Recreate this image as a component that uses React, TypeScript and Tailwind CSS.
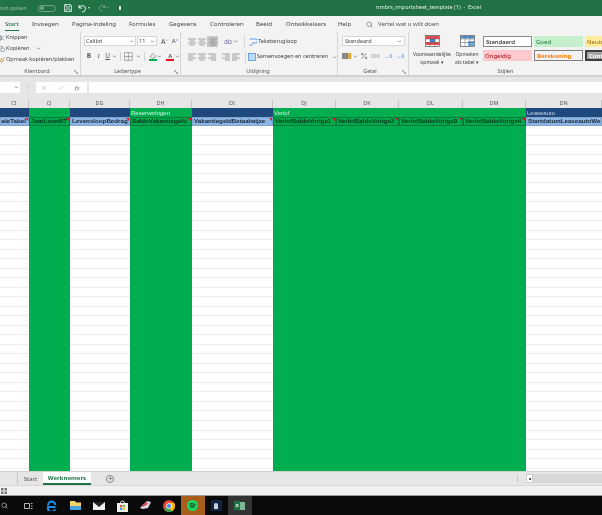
import React from 'react';
import { Scissors, Copy, Paintbrush, Search, Plus, Check, X, Percent, ChevronDown } from 'lucide-react';

const ui = "font-['Noto_Sans',sans-serif]";

const columns = [
  { id: 'CI', group: '', name: 'SchaleTabel', green: false, end: true },
  { id: 'CJ', group: '', name: 'JaarLoonBT', green: true },
  { id: 'DG', group: '', name: 'LevensloopBedrag', green: false },
  { id: 'DH', group: 'Reserveringen', name: 'SaldoVakantiegeld', green: true },
  { id: 'DI', group: '', name: 'VakantiegeldBetaalwijze', green: false },
  { id: 'DJ', group: 'Verlof', name: 'VerlofSaldoVorige1', green: true },
  { id: 'DK', group: '', name: 'VerlofSaldoVorige2', green: true },
  { id: 'DL', group: '', name: 'VerlofSaldoVorige3', green: true },
  { id: 'DM', group: '', name: 'VerlofSaldoVorige4', green: true },
  { id: 'DN', group: 'Leaseauto', name: 'StartdatumLeaseautoWerknemer', green: false, noFlag: true },
];

const gridCols = 'grid grid-cols-[29px_41px_60px_62px_81px_63px_63px_64px_63px_76px]';
const rows = Array.from({ length: 37 }, (_, i) => i);

const tabs = [
  ['Invoegen', 'w-[40px]'],
  ['Pagina-indeling', 'w-[57px]'],
  ['Formules', 'w-[40px]'],
  ['Gegevens', 'w-[41px]'],
  ['Controleren', 'w-[46px]'],
  ['Beeld', 'w-[30px]'],
  ['Ontwikkelaars', 'w-[52px]'],
  ['Help', 'w-[28px]'],
];

// three or four thin lines, the alignment glyphs of the ribbon
const Lines = ({ align = 'left' }: { align?: 'left' | 'center' | 'right' }) => {
  const short = align === 'left' ? 'M0 3h5' : align === 'center' ? 'M1.5 3h5' : 'M3 3h5';
  const short2 = align === 'left' ? 'M0 7h5' : align === 'center' ? 'M1.5 7h5' : 'M3 7h5';
  return (
    <svg width="8" height="8" viewBox="0 0 8 8" stroke="#8a8a8a" strokeWidth="0.8">
      <path d="M0 1h8" />
      <path d={short} />
      <path d="M0 5h8" />
      <path d={short2} />
    </svg>
  );
};

const Launcher = () => (
  <svg width="4" height="4" viewBox="0 0 4 4" fill="none" stroke="#777" strokeWidth="0.6" className="shrink-0">
    <path d="M0.3 0.3h2M0.3 0.3v2M1.2 1.2l2.5 2.5M3.7 2v1.7H2" />
  </svg>
);

const Caret = () => <ChevronDown className="w-[5px] h-[5px] text-[#555] shrink-0" strokeWidth={3} />;

const Group = ({ label, width, children, launcher }: { label: string; width: string; children: React.ReactNode; launcher?: boolean }) => (
  <div className={`${width} shrink-0 h-full flex flex-col border-r border-[#d4d4d4]`}>
    <div className="flex-1 min-h-0">{children}</div>
    <div className="h-[7px] flex items-center pr-[2px]">
      <span className="flex-1 text-center text-[5.5px] leading-none text-[#555]">{label}</span>
      {launcher && <Launcher />}
    </div>
  </div>
);

const StyleCell = ({ label, className }: { label: string; className: string }) => (
  <div className={`h-[11px] flex items-center px-[2px] text-[6px] leading-none whitespace-nowrap overflow-hidden ${className}`}>{label}</div>
);

const TableIcon = ({ kind }: { kind: 'cond' | 'table' }) => (
  <svg width="15" height="12" viewBox="0 0 15 12">
    <rect x="0.5" y="0.5" width="14" height="11" fill="#fff" stroke="#555" strokeWidth="0.7" />
    {kind === 'cond' ? (
      <>
        <rect x="1" y="1" width="13" height="3" fill="#e8474c" />
        <rect x="1" y="7" width="13" height="3" fill="#e8474c" />
        <rect x="5" y="4" width="5" height="3" fill="#3b82d6" />
      </>
    ) : (
      <>
        <rect x="1" y="1" width="13" height="2.5" fill="#4a90d9" />
        <rect x="8" y="6" width="6" height="5" fill="#6aaee6" />
      </>
    )}
    <path d="M5 0.5v11M10 0.5v11M0.5 4h14M0.5 7.5h14" stroke="#666" strokeWidth="0.5" />
  </svg>
);

const Ribbon = () => (
  <div className={`h-[45px] bg-[#f3f3f3] flex border-b-[2px] border-[#d2d2d2] text-[#444] ${ui}`}>
    <Group label="Klembord" width="w-[81px]" launcher>
      <div className="flex flex-col text-[5.5px] leading-none">
        <div className="h-[11px] flex items-center gap-[1px]">
          <Scissors className="w-[6px] h-[6px] -ml-[1px] text-[#5a6b7a]" />
          <span>Knippen</span>
        </div>
        <div className="h-[11px] flex items-center gap-[1px]">
          <Copy className="w-[6px] h-[6px] -ml-[1px] text-[#5a6b7a]" />
          <span>Kopiëren</span>
          <span className="ml-[6px]"><Caret /></span>
        </div>
        <div className="h-[11px] flex items-center gap-[1px] whitespace-nowrap">
          <Paintbrush className="w-[6px] h-[6px] -ml-[1px] text-[#b8862d]" />
          <span>Opmaak kopiëren/plakken</span>
        </div>
      </div>
    </Group>

    <Group label="Lettertype" width="w-[100px]" launcher>
      <div className="pl-[3px] pt-[4px] flex flex-col gap-[6px]">
        <div className="flex items-center gap-[1px]">
          <div className="w-[52px] h-[10px] bg-white border border-[#d6d6d6] flex items-center justify-between px-[1px] text-[5.5px]">
            Calibri <Caret />
          </div>
          <div className="w-[20px] h-[10px] bg-white border border-[#d6d6d6] flex items-center justify-between px-[1px] text-[5.5px]">
            11 <Caret />
          </div>
          <span className="text-[7px] leading-none ml-[3px]">A<sup className="text-[#3b82d6] text-[4px]">^</sup></span>
          <span className="text-[6px] leading-none ml-[3px]">A<sup className="text-[#3b82d6] text-[4px]">v</sup></span>
        </div>
        <div className="flex items-center text-[6.5px] leading-none text-[#555]">
          <span className="w-[10px] text-center font-bold">B</span>
          <span className="w-[10px] text-center italic font-['Liberation_Serif',serif]">I</span>
          <span className="w-[9px] text-center underline">U</span>
          <Caret />
          <span className="w-[1px] h-[9px] bg-[#d4d4d4] mx-[3px]" />
          <svg width="9" height="9" viewBox="0 0 9 9" fill="none" stroke="#888" strokeWidth="0.7"><path d="M0.5 0.5h8v8h-8zM4.5 0.5v8M0.5 4.5h8" /></svg>
          <span className="ml-[3px]"><Caret /></span>
          <span className="w-[1px] h-[9px] bg-[#d4d4d4] mx-[3px]" />
          <span className="flex flex-col items-center w-[10px]">
            <svg width="8" height="6" viewBox="0 0 8 6"><path d="M4 0.5L7 3.5 4 5.5 1 3.5z" fill="#eee" stroke="#666" strokeWidth="0.6" /></svg>
            <span className="w-[8px] h-[2px] bg-[#00b050]" />
          </span>
          <Caret />
          <span className="flex flex-col items-center w-[10px] ml-[3px]">
            <span className="text-[6px] leading-[6px] font-semibold">A</span>
            <span className="w-[8px] h-[2px] bg-[#e81123]" />
          </span>
          <Caret />
        </div>
      </div>
    </Group>

    <Group label="Uitlijning" width="w-[157px]">
      <div className="pl-[6px] pt-[4px] flex flex-col gap-[5px]">
        <div className="flex items-center h-[11px]">
          <span className="w-[10px] flex justify-center"><Lines align="center" /></span>
          <span className="w-[10px] flex justify-center"><Lines align="center" /></span>
          <span className="w-[11px] h-[11px] bg-[#c6c6c6] flex justify-center items-center"><Lines align="center" /></span>
          <span className="w-[10px] ml-[5px] flex justify-center text-[7px] leading-none text-[#7a6ea8]">ab</span>
          <Caret />
          <span className="w-[1px] h-[11px] bg-[#d4d4d4] ml-[6px] mr-[4px]" />
          <svg width="8" height="8" viewBox="0 0 8 8" fill="none" stroke="#3b82d6" strokeWidth="0.8"><path d="M0.5 1h6a1.5 1.5 0 010 4H3M0.5 7h3" /></svg>
          <span className="text-[5.5px] leading-none ml-[1px]">Tekstterugloop</span>
        </div>
        <div className="flex items-center h-[10px]">
          <span className="w-[10px] flex justify-center"><Lines align="left" /></span>
          <span className="w-[10px] flex justify-center"><Lines align="center" /></span>
          <span className="w-[11px] flex justify-center"><Lines align="right" /></span>
          <span className="w-[10px] ml-[4px] flex justify-center"><Lines align="right" /></span>
          <span className="w-[10px] flex justify-center"><Lines align="left" /></span>
          <span className="w-[1px] h-[11px] bg-[#d4d4d4] ml-[4px] mr-[2px]" />
          <svg width="8" height="8" viewBox="0 0 8 8"><rect x="0.5" y="0.5" width="7" height="7" fill="#bcd9f2" stroke="#3b82d6" strokeWidth="0.7" /></svg>
          <span className="text-[5.5px] leading-none ml-[1px] whitespace-nowrap">Samenvoegen en centreren</span>
          <span className="ml-[4px]"><Caret /></span>
        </div>
      </div>
    </Group>

    <Group label="Getal" width="w-[71px]" launcher>
      <div className="pl-[4px] pt-[4px] flex flex-col gap-[6px]">
        <div className="w-[63px] h-[10px] bg-white border border-[#d6d6d6] flex items-center justify-between px-[2px] text-[5.5px]">
          Standaard <Caret />
        </div>
        <div className="flex items-center gap-[2px]">
          <span className="w-[9px] h-[6px] bg-[#888] border-r-[3px] border-[#e8a33d]" />
          <Caret />
          <Percent className="w-[8px] h-[8px] text-[#666]" />
          <span className="text-[5px] leading-none text-[#999] ml-[1px]">000</span>
          <span className="text-[5px] leading-none text-[#3b82d6] ml-[3px]">←0</span>
          <span className="text-[5px] leading-none text-[#3b82d6] ml-[2px]">→0</span>
        </div>
      </div>
    </Group>

    <div className="flex-1 h-full flex flex-col overflow-hidden">
      <div className="flex flex-1 min-h-0">
        <div className="w-[44px] shrink-0 pt-[3px] pl-[2px] flex flex-col items-center text-[5px] leading-[8px]">
          <TableIcon kind="cond" />
          <span className="mt-[3px] whitespace-nowrap">Voorwaardelijke</span>
          <span>opmaak ▾</span>
        </div>
        <div className="w-[28px] shrink-0 pt-[3px] flex flex-col items-center text-[5px] leading-[8px]">
          <TableIcon kind="table" />
          <span className="mt-[3px] whitespace-nowrap">Opmaken</span>
          <span className="whitespace-nowrap">als tabel ▾</span>
        </div>
        <div className="flex-1 pt-[4px] pl-[2px] grid grid-cols-[49px_49px_49px] gap-x-[2px] gap-y-[3px] content-start">
          <StyleCell label="Standaard" className="bg-white border border-[#8a8a8a] text-black" />
          <StyleCell label="Goed" className="bg-[#c6efce] text-[#1e7a3c]" />
          <StyleCell label="Neutraal" className="bg-[#ffeb9c] text-[#9c6500]" />
          <StyleCell label="Ongeldig" className="bg-[#ffc7ce] text-[#9c0006]" />
          <StyleCell label="Berekening" className="bg-[#f2f2f2] border border-[#7f7f7f] text-[#fa7d00] font-bold" />
          <StyleCell label="Controle" className="bg-[#a5a5a5] border-2 border-[#3f3f3f] text-white font-bold" />
        </div>
      </div>
      <div className="h-[7px] flex items-center justify-center text-[5.5px] leading-none text-[#555]">Stijlen</div>
    </div>
  </div>
);

const TaskIcon = ({ children, className = '' }: { children?: React.ReactNode; className?: string }) => (
  <div className={`w-[23.5px] h-full shrink-0 flex items-center justify-center ${className}`}>{children}</div>
);

export default function App() {
  return (
    <div className="w-[602px] h-[515px] overflow-hidden flex flex-col bg-[#e6e6e6] blur-[0.45px]">
      {/* title bar */}
      <div className={`h-[16px] shrink-0 bg-[#217346] flex items-center text-[#d7e8de] text-[5.5px] leading-none whitespace-nowrap ${ui}`}>
        <span className="-ml-[18px] w-[54px] text-[4.5px] opacity-60">Automatisch opslaan</span>
        <span className="w-[18px] h-[7px] rounded-full border border-[#6fa488] flex items-center pl-[1px] ml-[2px]">
          <span className="w-[4px] h-[4px] rounded-full bg-[#6fa488]" />
        </span>
        <svg width="8" height="8" viewBox="0 0 8 8" fill="none" stroke="#e3efe8" strokeWidth="0.8" className="ml-[8px]">
          <path d="M0.5 0.5h6l1 1v6h-7zM2 0.5v2.5h4V0.5M2 7.5V5h4v2.5" />
        </svg>
        <svg width="9" height="9" viewBox="0 0 9 9" fill="none" stroke="#e3efe8" strokeWidth="1" className="ml-[6px]">
          <path d="M1 1v3h3M1.2 4A3.2 3.2 0 114 8" />
        </svg>
        <span className="w-0 h-0 border-x-[1.5px] border-t-[2px] border-x-transparent border-t-[#e3efe8] ml-[1px]" />
        <svg width="8" height="8" viewBox="0 0 9 9" fill="none" stroke="#6fa488" strokeWidth="1" className="ml-[8px]">
          <path d="M8 1v3H5M7.8 4A3.2 3.2 0 105 8" />
        </svg>
        <span className="w-0 h-0 border-x-[1.5px] border-t-[2px] border-x-transparent border-t-[#6fa488] ml-[1px]" />
        <span className="w-[2px] h-[4px] bg-[#e3efe8] ml-[10px]" />
        <span className="ml-[255px] text-[#e3efe8]">nmbrs_importsheet_template (1)&nbsp; -&nbsp; Excel</span>
      </div>

      {/* ribbon tabs */}
      <div className={`h-[16px] shrink-0 bg-[#f3f3f3] flex items-center text-[6px] leading-none text-[#444] whitespace-nowrap pl-[5px] ${ui}`}>
        <span className="w-[27px]"><span className="font-medium text-[#217346] border-b border-[#217346] pb-[2px]">Start</span></span>
        {tabs.map(([label, width]) => (
          <span key={label} className={`${width} shrink-0`}>{label}</span>
        ))}
        <Search className="w-[7px] h-[7px] text-[#666] shrink-0" />
        <span className="ml-[5px] text-[#555]">Vertel wat u wilt doen</span>
      </div>

      <Ribbon />

      {/* formula bar */}
      <div className={`h-[23px] shrink-0 bg-[#e6e6e6] flex pt-[5px] pb-[7px] ${ui}`}>
        <div className="w-[20px] bg-white flex items-center justify-end pr-[1px]"><Caret /></div>
        <div className="w-[16px] flex items-center justify-center text-[#aaa] text-[6px]">⋮</div>
        <div className="w-[51px] bg-white flex items-center gap-[11px] pl-[5px] text-[#777]">
          <X className="w-[6px] h-[6px] text-[#aaa]" />
          <Check className="w-[6px] h-[6px] text-[#aaa]" />
          <span className="text-[6px] leading-none italic font-['Liberation_Serif',serif] text-[#555]">fx</span>
        </div>
        <div className="flex-1 bg-white ml-[2px]" />
      </div>

      {/* sheet */}
      <div className="flex-1 min-h-0 overflow-hidden flex flex-col bg-white">
        <div className={`${gridCols} h-[8px] shrink-0 bg-[#e6e6e6] ${ui}`}>
          {columns.map(c => (
            <div key={c.id} className="border-r border-[#c4c4c4] flex items-center justify-center text-[5.5px] leading-none text-[#555]">{c.id}</div>
          ))}
        </div>
        <div className={`${gridCols} h-[9px] shrink-0 font-['Liberation_Sans',sans-serif]`}>
          {columns.map(c => (
            <div key={c.id} className={`${c.green ? 'bg-[#00ae4f] text-[#d4f5e0]' : 'bg-[#1f497d] text-[#c5d5e8]'} flex items-center px-[1px] text-[6px] leading-none whitespace-nowrap overflow-hidden`}>{c.group}</div>
          ))}
        </div>
        <div className={`${gridCols} h-[9px] shrink-0 font-['Liberation_Sans',sans-serif]`}>
          {columns.map(c => (
            <div key={c.id} className={`relative overflow-hidden flex items-center ${c.end ? 'justify-end pr-[2px]' : 'px-[1px]'} text-[6.2px] font-bold leading-none whitespace-nowrap border ${c.green ? 'bg-[#00a84c] text-[#06351b] border-[#0f7a3d]' : 'bg-[#8db4e2] text-[#16263a] border-[#7fa5d0]'}`}>
              {c.name}
              {!c.noFlag && <span className="absolute top-0 right-0 w-0 h-0 border-t-[3px] border-l-[3px] border-t-[#e81123] border-l-transparent" />}
            </div>
          ))}
        </div>
        <div className="flex-1 min-h-0 overflow-hidden">
          {rows.map(r => (
            <div key={r} className={`${gridCols} h-[9.53px]`}>
              {columns.map(c => (
                <div key={c.id} className={c.green ? 'bg-[#00ae4f]' : 'bg-white border-b border-[#ececec]'} />
              ))}
            </div>
          ))}
        </div>
      </div>

      {/* sheet tabs */}
      <div className={`h-[14px] shrink-0 bg-[#e6e6e6] border-t border-[#d0d0d0] flex items-stretch ${ui}`}>
        <div className="w-[18px] border-r border-[#c4c4c4] my-[1px]" />
        <div className="w-[25px] flex items-center justify-center text-[6px] leading-none text-[#555]">Start</div>
        <div className="w-[48px] bg-white border-b-2 border-[#217346] flex items-center justify-center text-[6px] font-bold leading-none text-[#217346]">Werknemers</div>
        <div className="w-[23px] flex items-center justify-end">
          <span className="w-[8px] h-[8px] rounded-full border border-[#888] flex items-center justify-center">
            <Plus className="w-[5px] h-[5px] text-[#666]" strokeWidth={3} />
          </span>
        </div>
        <div className="w-[412px] flex items-center justify-end pr-[8px]">
          <span className="w-[1px] h-[7px] bg-[#c4c4c4]" />
        </div>
        <div className="w-[7px] my-[2px] bg-white border border-[#ccc] flex items-center justify-center">
          <span className="w-[2px] h-[2px] bg-[#555]" />
        </div>
        <div className="flex-1 my-[2px] bg-[#d8d8d8]" />
      </div>

      {/* status bar */}
      <div className="h-[10px] shrink-0 bg-[#f2f1ef] border-t border-[#d8d8d8] flex items-center pl-[1px]">
        <svg width="6" height="6" viewBox="0 0 6 6" fill="#777"><path d="M0 0h2.5v2.5H0zM3.5 0H6v2.5H3.5zM0 3.5h2.5V6H0zM3.5 3.5H6V6H3.5z" /></svg>
      </div>

      {/* taskbar */}
      <div className="h-[20px] shrink-0 bg-[#0a0a0a] border-t border-[#9a9a9a] flex items-stretch -ml-[7px]">
        <TaskIcon><Search className="w-[7px] h-[7px] text-[#ddd]" /></TaskIcon>
        <TaskIcon>
          <svg width="9" height="8" viewBox="0 0 9 8" fill="none" stroke="#ddd" strokeWidth="0.8"><path d="M0.5 1.5h5v5h-5zM7 1.5h1.5M7 4h1.5M7 6.5h1.5" /></svg>
        </TaskIcon>
        <TaskIcon>
          <svg width="11" height="11" viewBox="0 0 11 11" fill="none" stroke="#1c8fe8" strokeWidth="2"><path d="M9.5 7H2a3.5 3.5 0 107 2.2M2 5.5A3.6 3.6 0 019.4 5" /></svg>
        </TaskIcon>
        <TaskIcon>
          <svg width="11" height="9" viewBox="0 0 11 9"><path d="M0 0h5l1 1.5h5V9H0z" fill="#f5d36b" /><rect x="0" y="5" width="11" height="4" fill="#4aa3df" /></svg>
        </TaskIcon>
        <TaskIcon>
          <svg width="12" height="8" viewBox="0 0 12 8"><rect width="12" height="8" fill="#eee" /><path d="M0 0l6 5 6-5z" fill="#222" /></svg>
        </TaskIcon>
        <TaskIcon>
          <svg width="11" height="12" viewBox="0 0 11 12"><path d="M0 3h11v9H0z" fill="#eee" /><path d="M3.5 3a2 2 0 014 0" fill="none" stroke="#eee" /><rect x="3" y="5" width="2.2" height="2.2" fill="#e8532b" /><rect x="5.8" y="5" width="2.2" height="2.2" fill="#7db83a" /><rect x="3" y="7.8" width="2.2" height="2.2" fill="#2a9fe0" /><rect x="5.8" y="7.8" width="2.2" height="2.2" fill="#f5b923" /></svg>
        </TaskIcon>
        <TaskIcon>
          <svg width="13" height="11" viewBox="0 0 13 11"><path d="M1 8L8 1l4 1-3 6-5 1z" fill="#d9d9e6" /><path d="M3 5l5-3 1 2-5 3z" fill="#d8484e" /></svg>
        </TaskIcon>
        <TaskIcon>
          <svg width="12" height="12" viewBox="0 0 12 12">
            <circle cx="6" cy="6" r="6" fill="#e8453c" />
            <path d="M6 6L1 9a6 6 0 007.5 2.4z" fill="#34a853" />
            <path d="M6 6l2.5 5.4A6 6 0 0012 6a6 6 0 00-1-3.2H6z" fill="#fbbc05" />
            <circle cx="6" cy="6" r="2.8" fill="#fff" />
            <circle cx="6" cy="6" r="2.1" fill="#4285f4" />
          </svg>
        </TaskIcon>
        <TaskIcon className="bg-[#a85f1e]">
          <svg width="11" height="11" viewBox="0 0 11 11" fill="none">
            <circle cx="5.5" cy="5.5" r="5.5" fill="#1ed760" />
            <path d="M2.5 4c2-.6 4-.4 6 .6M3 5.7c1.7-.4 3.3-.3 5 .5M3.3 7.2c1.4-.3 2.8-.2 4 .4" stroke="#111" strokeWidth="0.8" />
          </svg>
        </TaskIcon>
        <TaskIcon>
          <span className="w-[11px] h-[11px] bg-[#13233f] flex items-center justify-center">
            <span className="w-[4px] h-[6px] bg-[#c8d2e0] rounded-t-full" />
          </span>
        </TaskIcon>
        <TaskIcon className="bg-[#333]">
          <span className="flex items-center">
            <span className="w-[6px] h-[9px] bg-[#1e7145] text-white text-[6px] leading-[9px] text-center font-bold font-['Liberation_Sans',sans-serif]">x</span>
            <span className="w-[5px] h-[8px] bg-[#7fb897]" />
          </span>
        </TaskIcon>
      </div>
    </div>
  );
}
